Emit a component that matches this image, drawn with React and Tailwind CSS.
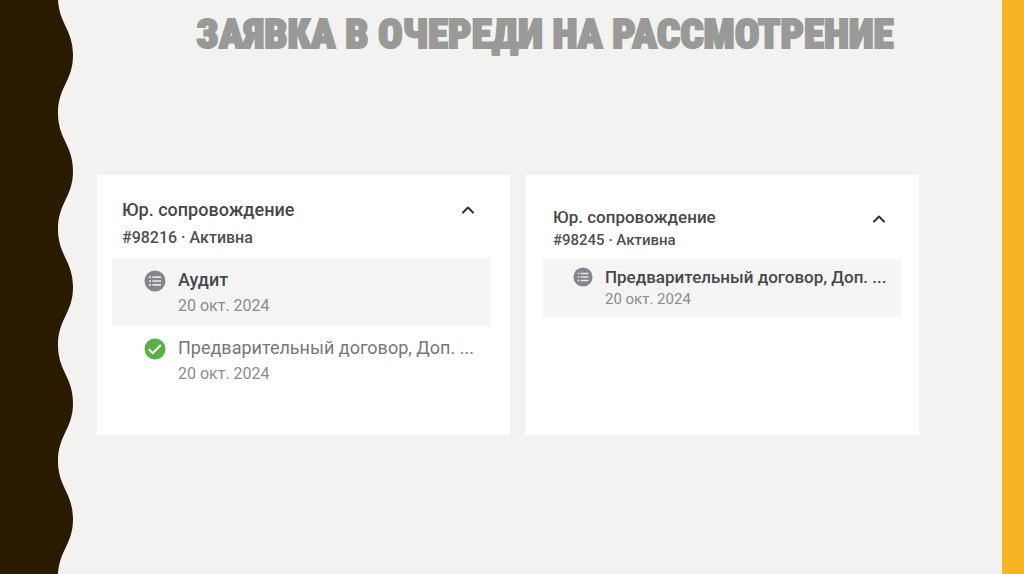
import { ChevronUp } from "lucide-react";

const large = {
  card: "pt-[23px] pl-[15px] pr-5",
  header: "px-[10px] pb-1",
  title: "text-lg leading-6",
  meta: "text-base leading-8",
  row: "h-[68px] gap-3 pl-8 pr-3 pt-2",
  icon: "mt-1 h-[22px] w-[22px]",
  name: "text-lg leading-7",
  date: "text-base leading-6",
};

const small = {
  card: "pt-8 pl-[18px] pr-[18px]",
  header: "px-[10px] pb-[6px]",
  title: "text-[17px] leading-5",
  meta: "text-[15px] leading-[26px]",
  row: "h-[58px] gap-3 pl-[30px] pr-3 pt-2",
  icon: "h-5 w-5",
  name: "text-[17px] leading-5",
  date: "text-[15px] leading-6",
};

function WaveEdge() {
  return (
    <svg className="w-[73px] shrink-0 self-stretch" aria-hidden="true">
      <defs>
        <pattern id="wave" x="0" y="-3" width="73" height="116" patternUnits="userSpaceOnUse">
          <path d="M0 0H58C58 26 73 32 73 58C73 84 58 90 58 116H0Z" fill="#2a1a00" />
        </pattern>
      </defs>
      <rect width="73" height="100%" fill="url(#wave)" />
    </svg>
  );
}

function ListIcon({ className }) {
  return (
    <svg viewBox="0 0 22 22" className={`shrink-0 ${className}`} aria-hidden="true">
      <circle cx="11" cy="11" r="10.5" fill="#85858d" />
      <path d="M5 7.2h2M5 11h2M5 14.8h2M8.4 7.2H17M8.4 11H17M8.4 14.8H17" stroke="#e6e6ea" strokeWidth="1.7" />
    </svg>
  );
}

function DoneIcon({ className }) {
  return (
    <svg viewBox="0 0 22 22" className={`shrink-0 ${className}`} aria-hidden="true">
      <circle cx="11" cy="11" r="10.5" fill="#58b046" />
      <path d="M4.8 11.2l4 4 8-8.2" fill="none" stroke="#fff" strokeWidth="2" />
    </svg>
  );
}

function RequestCard({ size, number, items }) {
  return (
    <article className={`min-w-0 bg-white pb-8 font-[Roboto,sans-serif] ${size.card}`}>
      <header className={`flex items-start justify-between ${size.header}`}>
        <div>
          <h2 className={`font-medium text-[#47474a] ${size.title}`}>Юр. сопровождение</h2>
          <p className={`font-medium text-[#4f4f52] ${size.meta}`}>#{number} · Активна</p>
        </div>
        <button type="button" aria-label="Свернуть" className="mt-[2px] mr-[2px] text-[#333]">
          <ChevronUp className="h-5 w-5" strokeWidth={2.5} />
        </button>
      </header>
      <ul>
        {items.map((item) => (
          <li key={item.name} className={`flex items-start ${size.row} ${item.done ? "" : "bg-[#f5f5f6]"}`}>
            {item.done ? <DoneIcon className={size.icon} /> : <ListIcon className={size.icon} />}
            <div className="min-w-0">
              <p className={`whitespace-nowrap ${size.name} ${item.done ? "text-[#77777a]" : "font-medium text-[#47474a]"}`}>
                {item.name}
              </p>
              <p className={`text-[#8b8b8e] ${size.date}`}>20 окт. 2024</p>
            </div>
          </li>
        ))}
      </ul>
    </article>
  );
}

export default function App() {
  return (
    <div className="flex min-h-screen bg-[#f2f2f0]">
      <WaveEdge />
      <main className="min-w-0 flex-1 pl-6 pr-[83px]">
        <h1 className="flex h-[175px] items-start justify-center whitespace-nowrap pl-[74px] pt-1 font-[Impact,Anton,'Roboto_Condensed',sans-serif] text-[41px] leading-[54px] font-black text-[#999997] [-webkit-text-stroke:2px_#999997]">
          ЗАЯВКА В ОЧЕРЕДИ НА РАССМОТРЕНИЕ
        </h1>
        <div className="grid min-h-[260px] grid-cols-[414fr_395fr] gap-[15px]">
          <RequestCard
            size={large}
            number="98216"
            items={[
              { name: "Аудит" },
              { name: "Предварительный договор, Доп. ...", done: true },
            ]}
          />
          <RequestCard size={small} number="98245" items={[{ name: "Предварительный договор, Доп. ..." }]} />
        </div>
      </main>
      <div className="w-[22px] shrink-0 bg-[#f8b323]" />
    </div>
  );
}
